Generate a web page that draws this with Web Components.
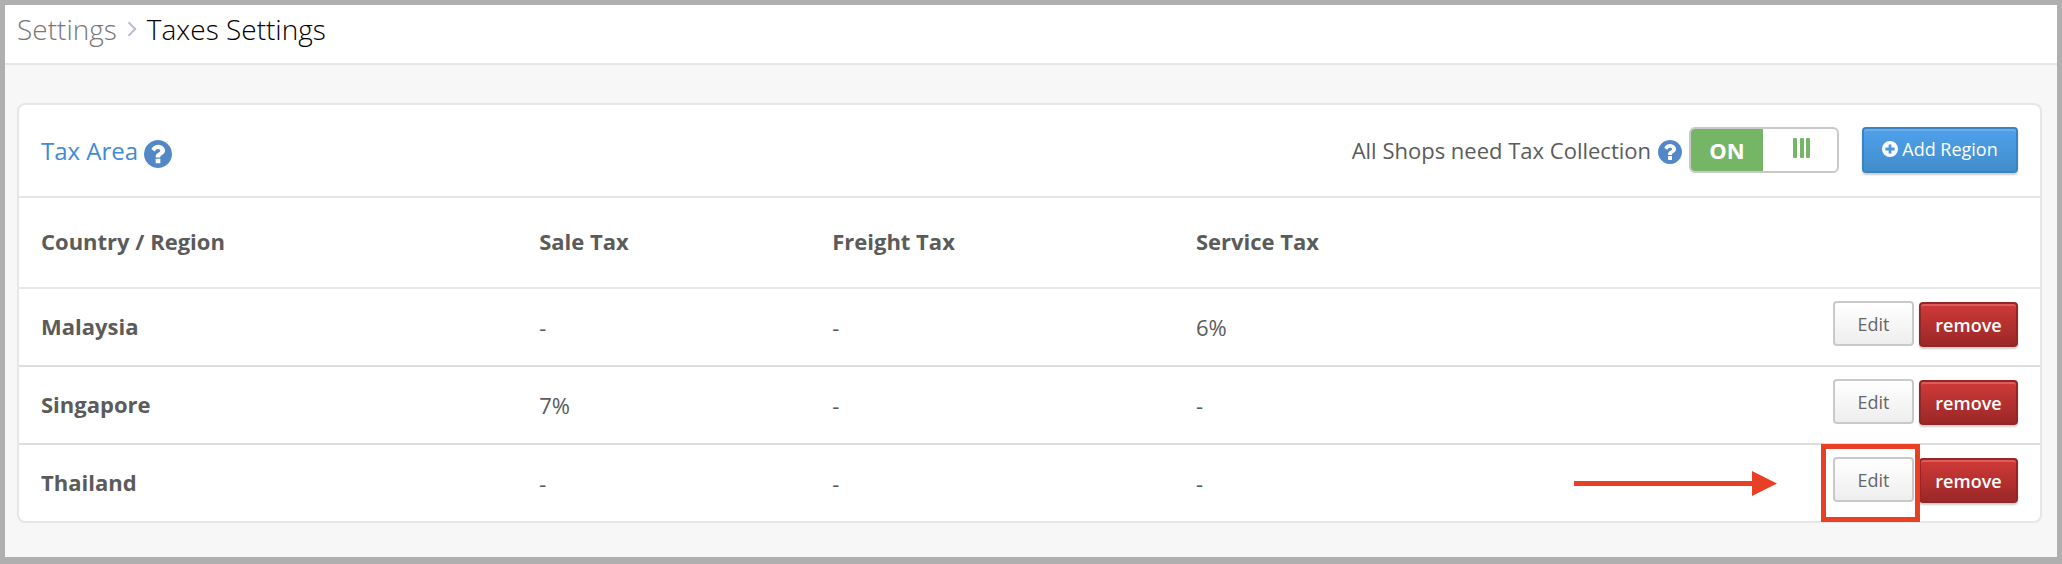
<!DOCTYPE html>
<html lang="en">
<head>
<meta charset="utf-8">
<title>Taxes Settings</title>
<style>
  body { margin: 0; background: #f7f7f7; color: #5b5b5b; font: 22px/32px "Open Sans", "Noto Sans", sans-serif; }
</style>
</head>
<body>
<app-frame>
  <page-header slot="header"></page-header>
  <tax-card>
    <tax-toolbar slot="toolbar"></tax-toolbar>
    <tax-table></tax-table>
  </tax-card>
</app-frame>

<script>
  const define = (name, markup, setup) => {
    const template = document.createElement('template');
    template.innerHTML = markup;
    customElements.define(name, class extends HTMLElement {
      constructor() {
        super();
        this.attachShadow({ mode: 'open' }).append(template.content.cloneNode(true));
        if (setup) setup(this, this.shadowRoot);
      }
    });
  };

  define('app-frame', `
    <style>
      :host { display: flex; flex-direction: column; box-sizing: border-box; min-height: 100vh; border: 5px solid #afafaf; border-bottom-width: 7px; background: #f7f7f7; }
      main { padding: 38px 15px 34px 12px; }
    </style>
    <slot name="header"></slot>
    <main><slot></slot></main>`);

  define('page-header', `
    <style>
      :host { display: block; background: #fff; border-bottom: 2px solid #e6e6e6; }
      nav { display: flex; align-items: center; padding: 5px 12px 15px; }
      a, h1 { margin: 0; font-size: 28px; line-height: 38px; font-weight: 300; }
      a { color: #777; text-decoration: none; }
      h1 { color: #000; }
      svg { width: 10px; height: 16px; margin: 0 10px; }
    </style>
    <nav aria-label="Breadcrumb">
      <a href="#settings">Settings</a>
      <svg viewBox="0 0 10 16" aria-hidden="true"><path d="M1.5 1.2 8.2 8l-6.7 6.8" fill="none" stroke="#b9bfcd" stroke-width="2"/></svg>
      <h1>Taxes Settings</h1>
    </nav>`);

  define('tax-card', `
    <style>
      :host { display: block; background: #fff; border: 2px solid #e6e6e6; border-radius: 8px; }
    </style>
    <slot name="toolbar"></slot>
    <slot></slot>`);

  define('help-icon', `
    <style>
      :host { display: block; flex: none; width: 24px; height: 24px; margin-top: 5px; }
      :host([large]) { width: 28px; height: 28px; }
      svg { display: block; width: 100%; height: 100%; }
    </style>
    <svg viewBox="0 0 1536 1536" role="img" aria-label="Help"><path fill="#5388c7" d="M896 1248v-192q0-14-9-23t-23-9H672q-14 0-23 9t-9 23v192q0 14 9 23t23 9h192q14 0 23-9t9-23zm256-672q0-88-55.500-163T958 297t-170-41q-243 0-371 213-15 24 8 42l132 100q7 6 19 6 16 0 25-12 53-68 86-92 34-24 86-24 48 0 85.500 26t37.500 59q0 38-20 61t-68 45q-63 28-115.500 86.500T640 892v36q0 14 9 23t23 9h192q14 0 23-9t9-23q0-19 21.500-49.500T972 829q32-18 49-28.500t46-35 44.500-48 28-60.500 12.500-81zm384 192q0 209-103 385.500T1153.500 1433 768 1536t-385.500-103T103 1153.500 0 768t103-385.500T382.500 103 768 0t385.500 103T1433 382.500 1536 768z"/></svg>`);

  define('toggle-switch', `
    <style>
      :host { position: relative; display: grid; grid-template-columns: 72px 1fr; box-sizing: border-box; flex: none; width: 150px; height: 46px; border: 2px solid #c9c9c9; border-radius: 6px; background: #fff; overflow: hidden; }
      span { background: #74b666; color: #fff; font-weight: 700; line-height: 42px; text-align: center; }
      svg { width: 18px; height: 20px; margin: 9px 30px; }
      input { position: absolute; inset: 0; width: 100%; height: 100%; margin: 0; opacity: 0; cursor: pointer; }
    </style>
    <span>ON</span>
    <svg viewBox="0 0 18 20" aria-hidden="true"><g fill="#74b666"><rect width="4" height="20" rx="1"/><rect x="7" width="4" height="20" rx="1"/><rect x="13" width="4" height="20" rx="1"/></g></svg>
    <input type="checkbox" role="switch" checked aria-label="All Shops need Tax Collection">`);

  define('ui-button', `
    <style>
      :host { display: block; }
      button { display: flex; align-items: center; justify-content: center; gap: 4px; box-sizing: border-box; width: 100%; height: 45px; margin: 0; padding: 0; border: 2px solid #c9c9c9; border-radius: 4px; background: linear-gradient(#fff, #eee); color: #666; font: 18px/24px "Open Sans", "Noto Sans", sans-serif; white-space: nowrap; cursor: pointer; }
      :host([kind=primary]) button { height: 46px; padding-bottom: 2px; border-color: #3b83c0; background: linear-gradient(#4fa1ec, #428dcb); color: #fff; box-shadow: inset 0 2px #6aaeec, 0 2px 2px #0003; }
      :host([kind=danger]) button { border-color: #962626; background: linear-gradient(#cf3a38, #9b2827); color: #fff; font-weight: 600; box-shadow: inset 0 2px #dc5c5a, 0 2px 2px #0003; }
    </style>
    <button type="button"><slot></slot></button>`);

  define('tax-toolbar', `
    <style>
      :host { display: flex; align-items: center; justify-content: space-between; box-sizing: border-box; min-height: 93px; padding: 0 22px 2px; border-bottom: 2px solid #e6e6e6; }
      div { display: flex; align-items: center; }
      .title { gap: 6px; padding-top: 3px; }
      h2 { margin: 0; color: #3f8cd8; font-size: 24px; line-height: 34px; font-weight: 400; }
      .controls { gap: 7px; }
      ui-button { width: 156px; margin-left: 16px; }
      ui-button svg { width: 16px; height: 16px; }
    </style>
    <div class="title"><h2>Tax Area</h2><help-icon large></help-icon></div>
    <div class="controls">
      <span>All Shops need Tax Collection</span>
      <help-icon></help-icon>
      <toggle-switch></toggle-switch>
      <ui-button kind="primary"><svg viewBox="0 0 15 15" aria-hidden="true"><path fill="#fff" fill-rule="evenodd" d="M7.500 0a7.500 7.500 0 1 0 0 15 7.500 7.500 0 0 0 0-15zM6.200 3.200h2.600v3h3v2.600h-3v3H6.200v-3h-3V6.200h3z"/></svg>Add Region</ui-button>
    </div>`);

  define('row-highlight', `
    <style>
      :host { position: relative; display: block; }
      .box { position: absolute; inset: -13px -6px -20px -12px; border: 5px solid #e93f25; pointer-events: none; z-index: 1; }
      svg { position: absolute; right: calc(100% + 56px); top: 14px; width: 203px; height: 25px; pointer-events: none; }
    </style>
    <slot></slot>
    <div class="box"></div>
    <svg viewBox="0 0 203 25" aria-hidden="true"><path fill="#e93f25" d="M0 10h178V0l25 12.500L178 25V15H0z"/></svg>`);

  define('tax-table', `
    <style>
      :host { display: block; }
      table { width: 100%; table-layout: fixed; border-collapse: separate; border-spacing: 0; }
      th, td { box-sizing: border-box; height: 78px; padding: 0 0 0 23px; text-align: left; border-bottom: 2px solid #ddd; }
      th { padding-bottom: 2px; font-weight: 700; }
      th:first-child { padding-left: 22px; }
      thead th { height: 91px; padding-bottom: 4px; border-bottom-color: #e6e6e6; }
      tbody tr:last-child > * { height: 76px; border-bottom: 0; }
      .country { width: 24.6%; }
      .sale { width: 14.5%; }
      .freight { width: 18%; }
      .service { width: 18%; }
      td.actions { padding: 12px 22px 0 0; vertical-align: top; }
      .actions div { display: flex; align-items: flex-start; justify-content: flex-end; gap: 5px; }
      .edit { width: 81px; }
      .remove { width: 99px; margin-top: 1px; }
    </style>
    <table>
      <thead><tr>
        <th class="country" scope="col">Country / Region</th>
        <th class="sale" scope="col">Sale Tax</th>
        <th class="freight" scope="col">Freight Tax</th>
        <th class="service" scope="col">Service Tax</th>
        <th aria-label="Actions"></th>
      </tr></thead>
      <tbody></tbody>
    </table>`, (host, root) => {
      const regions = [
        { name: 'Malaysia', taxes: ['-', '-', '6%'] },
        { name: 'Singapore', taxes: ['7%', '-', '-'] },
        { name: 'Thailand', taxes: ['-', '-', '-'], highlighted: true }
      ];
      root.querySelector('tbody').innerHTML = regions.map(({ name, taxes, highlighted }) => {
        const edit = '<ui-button class="edit">Edit</ui-button>';
        return `<tr><th scope="row">${name}</th>${taxes.map(t => `<td>${t}</td>`).join('')}
          <td class="actions"><div>${highlighted ? `<row-highlight>${edit}</row-highlight>` : edit}<ui-button class="remove" kind="danger">remove</ui-button></div></td></tr>`;
      }).join('');
    });
</script>
</body>
</html>
